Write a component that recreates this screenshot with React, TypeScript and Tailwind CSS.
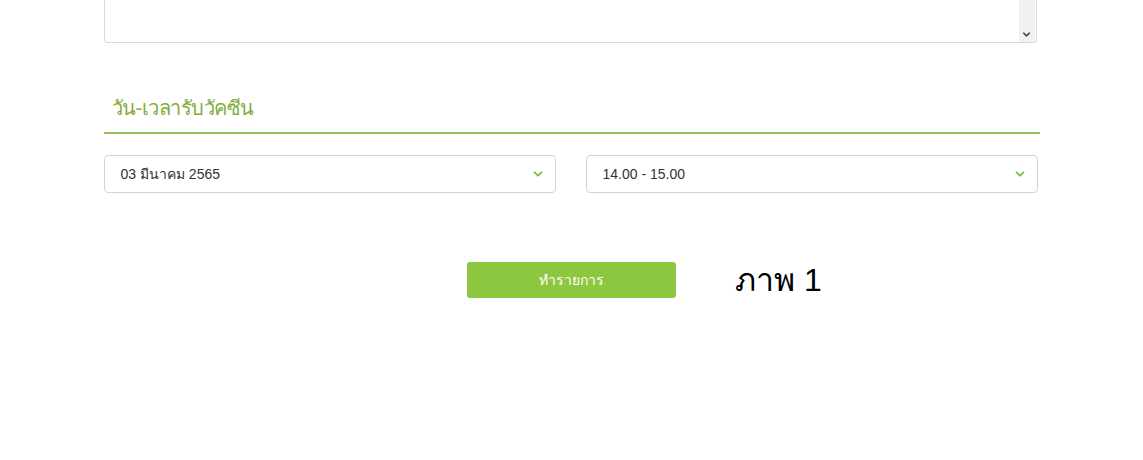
import { ChevronDown } from "lucide-react";

const THAI = "font-['Liberation_Sans','Noto_Sans',sans-serif]";

function SelectBox({ value }: { value: string }) {
  return (
    <div className="flex h-[38px] items-center justify-between rounded border border-[#d4d4d4] bg-white pl-4 pr-[10px]">
      <span className="text-[14px] text-[#333]">{value}</span>
      <ChevronDown size={14} strokeWidth={3} className="text-[#7ab342]" />
    </div>
  );
}

export default function App() {
  return (
    <div className={`min-h-[460px] w-full bg-white ${THAI}`}>
      <div className="mx-auto w-[936px]">
        {/* bottom of the textarea above */}
        <div className="mr-[3px] flex h-[43px] justify-end rounded-b border-x border-b border-[#d9d9d9]">
          <div className="mr-px flex w-[16px] flex-col items-center justify-end bg-[#f1f1f1] pb-[2px]">
            <ChevronDown size={11} strokeWidth={3.5} className="text-[#505050]" />
          </div>
        </div>

        <div className="mt-[53px] border-b-2 border-[#98c35a] pb-[12px] pl-2">
          <h2 className="text-[20px] leading-[24px] tracking-[-0.5px] text-[#7fae3a]">วัน-เวลารับวัคซีน</h2>
        </div>

        <div className="mt-[21px] grid grid-cols-2 gap-[30px] pr-[2px]">
          <SelectBox value="03 มีนาคม 2565" />
          <SelectBox value="14.00 - 15.00" />
        </div>

        <div className="mt-[69px] flex justify-center">
          <div className="relative">
            <button className="h-[36px] w-[209px] rounded-[3px] bg-[#8dc63f] text-[14px] text-white">
              ทำรายการ
            </button>
            <span className="absolute left-[268px] top-[-2px] whitespace-nowrap text-[32px] font-light leading-[40px] text-black">
              ภาพ 1
            </span>
          </div>
        </div>
      </div>
    </div>
  );
}
